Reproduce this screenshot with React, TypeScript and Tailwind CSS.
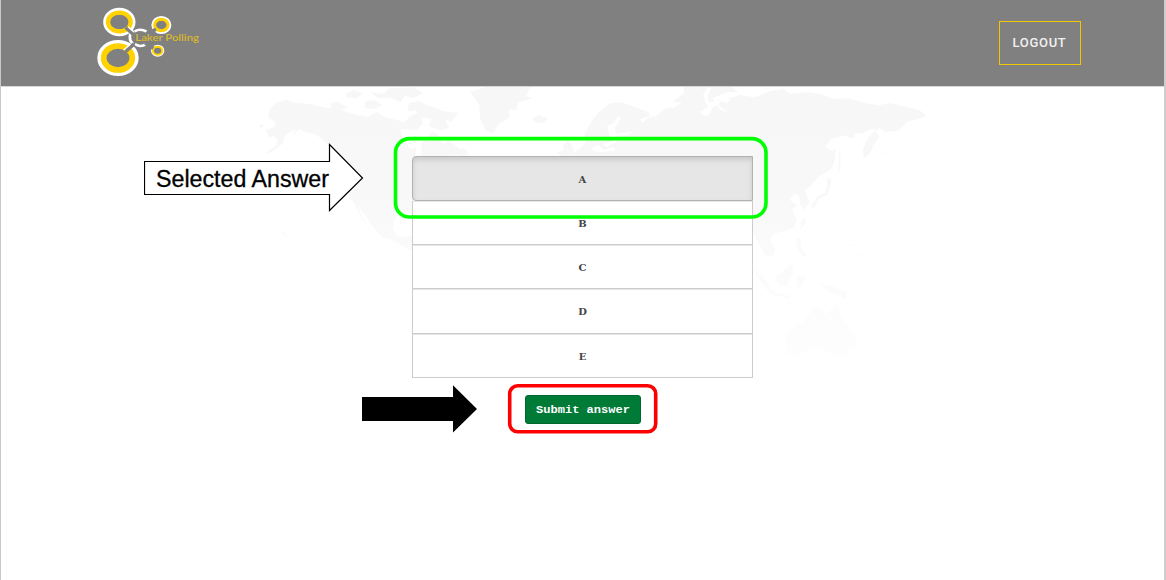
import React from "react";

const answers: string[] = ["B", "C", "D", "E"];

function Logo() {
  return (
    <svg width="130" height="86" viewBox="0 0 390 258" className="block" aria-label="Laker Polling">
      <g fill="none" stroke="#fff">
        <ellipse cx="103" cy="66" rx="39" ry="33" strokeWidth="19" />
        <ellipse cx="99" cy="174" rx="51" ry="43" strokeWidth="22" />
        <ellipse cx="229" cy="75" rx="24" ry="21" strokeWidth="12" />
        <ellipse cx="218" cy="152" rx="16" ry="14" strokeWidth="8" />
        <path d="M144 91A27 27 0 0 0 144 132M149 94Q166 84 185 95M150 132Q166 144 184 132" strokeWidth="8" />
      </g>
      <g fill="none" stroke="#ffd200">
        <ellipse cx="103" cy="66" rx="34" ry="28" strokeWidth="13" />
        <ellipse cx="99" cy="174" rx="43" ry="36" strokeWidth="17" />
        <ellipse cx="229" cy="75" rx="20" ry="17" strokeWidth="9" />
        <ellipse cx="218" cy="152" rx="14" ry="12" strokeWidth="6" />
      </g>
      <path d="M122 82L150 108M122 154L147 132M184 101L213 88M180 128L205 145" stroke="#808080" strokeWidth="11" />
      <path d="M129 80L148 97M116 150L136 133" stroke="#fff" strokeWidth="4" />
      <text x="151" y="124" textLength="191" lengthAdjust="spacingAndGlyphs" fill="#d9b72b" fontSize="27" fontFamily="Lato, sans-serif" fontWeight="600">Laker Polling</text>
    </svg>
  );
}

function WorldMap() {
  return (
    <svg width="1162" height="493" viewBox="1 87 1162 493" className="block">
      <defs>
        <linearGradient id="land" gradientUnits="userSpaceOnUse" x1="0" y1="20" x2="0" y2="860">
          <stop offset="0" stopColor="#f7f7f7" />
          <stop offset=".38" stopColor="#f8f8f8" />
          <stop offset=".65" stopColor="#fbfbfb" />
          <stop offset="1" stopColor="#fefefe" />
        </linearGradient>
      </defs>
      <g transform="translate(250 80) scale(.33333)" fill="url(#land)">
        <path d="M57 94L75 70L108 60L140 69L182 73L235 84L285 94L320 105L353 110L380 96L405 111L440 120L464 126L480 108L507 98L520 130L500 150L452 147L455 165L481 207L498 202L496 234L512 224L516 186L532 176L545 155L565 166L578 192L595 180L625 203L650 216L624 226L577 228L560 252L540 270L515 282L500 320L500 392L450 397L433 420L428 445L440 466L465 472L495 465L500 520L480 510L458 499L426 479L400 474L371 444L345 405L324 376L337 413L354 441L341 427L315 376L300 350L284 302L286 258L270 226L240 201L220 180L197 163L168 157L146 148L128 169L137 148L107 164L96 192L67 215L43 222L77 199L83 179L70 168L58 173L48 151L74 140L78 125L55 115Z" />
        <path d="M240 70L260 65L295 81L272 92L245 89ZM285 43L310 30L337 39L323 54L292 53ZM345 63L374 60L397 76L370 88L345 84ZM361 37L399 42L418 25L490 22L520 39L491 55L465 47L450 67L423 54L386 55ZM477 70L505 63L529 74L551 82L580 94L624 99L604 126L585 116L596 145L570 151L536 138L545 116L510 112L497 91L473 94ZM661 35L710 21L842 20L828 49L849 55L804 68L800 91L777 88L780 112L746 131L730 160L707 151L690 116L688 76ZM846 114L867 105L892 115L880 129L853 126ZM940 193L955 180L967 199L975 224L935 232L921 218L940 210ZM614 210L642 204L657 225L632 228Z" />
        <path d="M98 455l14 12l-5 5l-9-13M25 137l20-5l-12 12" />
      </g>
      <g transform="translate(570 80) scale(.33333)" fill="url(#land)">
        <path d="M44 161L65 123L85 97L120 70L155 67L180 76L236 97L239 109L210 117L216 129L235 113L258 109L284 86L314 82L337 67L306 67L342 40L340 20L480 20L505 35L470 37L445 51L450 63L420 67L402 58L415 82L390 95L402 107L420 89L452 66L480 55L507 45L554 52L600 34L642 27L660 42L710 36L753 43L787 57L835 55L884 69L925 76L962 69L1010 81L1050 91L1068 108L1048 116L1010 125L985 153L946 156L928 144L917 157L929 169L911 195L898 223L880 233L879 206L894 174L919 149L903 147L875 161L857 160L850 176L820 166L782 178L766 200L786 212L797 207L794 242L782 269L744 291L722 318L704 331L719 365L704 389L691 377L688 346L672 340L660 361L680 376L666 389L681 418L671 444L634 456L610 461L600 481L617 508L610 529L586 526L567 490L552 466L541 449L520 425L494 470L470 440L440 410L391 386L350 380L322 399L286 423L235 360L201 340L154 349L120 312L84 330L20 319L-30 337L-57 306L-34 277L0 279L9 219L30 207L47 185Z" />
        <path d="M807 207L806 258L800 282L810 267L812 230ZM772 290L785 302L780 322L772 345L745 358L730 389L722 377L742 350L765 338L772 315ZM695 421L704 413L707 429L690 449ZM679 472L691 477L693 504L711 528L696 528L681 500ZM550 565L586 597L606 632L660 648L657 657L599 640L575 611ZM617 590L665 552L670 578L650 620L627 615ZM681 591L707 585L700 610L680 628ZM745 610L786 618L830 637L827 657L779 637ZM645 765L673 740L702 723L735 681L755 685L765 705L802 673L811 709L827 728L858 768L857 803L821 839L788 825L759 811L723 805L675 830L650 827Z" />
        <path d="M844 497l18-5v4M860 522l20 6M890 547l17 8M928 213l35 14M820 299l17-9M839 281l14-9M857 264l9-9" stroke="#fafafa" strokeWidth="2" />
      </g>
      <g transform="translate(570 80) scale(.33333)" fill="#fff">
        <path d="M101 191L131 184L118 164L112 138L130 128L145 108L154 113L134 145L141 161L192 154L175 165L141 168L139 187L109 202ZM66 204L85 194L101 211L132 200L137 212L90 216L68 211ZM414 45L424 25L414 21L399 45L425 91L414 107L398 106L413 87ZM427 55L456 43L481 61L469 69L445 58L446 76L473 98L449 88L434 68Z" />
      </g>
    </svg>
  );
}

export default function App() {
  return (
    <div className="relative flex h-[580px] w-[1166px] flex-col overflow-hidden border-l border-[#c9c9c9] bg-white">
      <div className="flex h-full w-[1165px] flex-col border-r-2 border-[#cdcdcd]">
        <header className="flex h-[87px] shrink-0 items-start justify-between border-b border-[#d8d8d8] bg-[#808080] pr-[83px] pl-[84px]">
          <Logo />
          <button className="mt-[21px] flex h-11 w-[82px] items-center justify-center border border-[#f0c800] pr-px font-[Roboto,sans-serif] text-[13px] font-medium tracking-[0.7px] text-[#f1f1f1]">
            LOGOUT
          </button>
        </header>

        <main className="relative flex flex-1 flex-col items-center pt-[69px]">
          <div className="absolute inset-0">
            <WorldMap />
          </div>
          <div className="relative flex w-[341px] flex-col font-['DejaVu_Serif',serif] text-[10px] font-bold text-[#444]">
            <button className="h-[45px] rounded-l border border-[#b2b2b2] bg-[#e6e6e6] pt-0.5 shadow-[inset_0_3px_5px_rgba(0,0,0,0.125)]">
              A
            </button>
            {answers.map((answer) => (
              <button key={answer} className="h-[44.2px] border-x border-b border-[#ccc] bg-white pt-0.5 shadow-[inset_0_1px_0_#e6e6e6]">
                {answer}
              </button>
            ))}
          </div>
          <button className="relative mt-[17px] flex h-[29px] w-[116px] items-center justify-center rounded-[3px] border border-[#00682f] bg-[#007a37] text-white">
            <svg width="94" height="18" className="block">
              <text x="0" y="13" textLength="94" lengthAdjust="spacingAndGlyphs" fill="currentColor" fontSize="11.5" fontWeight="700" fontFamily="'Liberation Mono', monospace">Submit answer</text>
            </svg>
          </button>
        </main>
      </div>

      <svg width="376" height="84" className="absolute top-[136px] left-[392px]">
        <rect x="2.5" y="2.6" width="370.5" height="78.4" rx="14" fill="none" stroke="#00ff00" strokeWidth="3.6" />
      </svg>
      <svg width="152" height="52" className="absolute top-[383px] left-[506px]">
        <rect x="2.7" y="2.8" width="146" height="46" rx="8" fill="none" stroke="#ff0000" strokeWidth="3.6" />
      </svg>
      <svg width="222" height="70" className="absolute top-[143px] left-[143px]">
        <path d="M.5 18.5H185.5V1.5L218.5 35L185.5 67.5V51.5H.5Z" fill="#fff" stroke="#000" strokeWidth="1.2" />
        <text x="12" y="44" textLength="173" lengthAdjust="spacingAndGlyphs" fontSize="23" fontFamily="'Liberation Sans', sans-serif" fill="#000" stroke="#000" strokeWidth=".3">Selected Answer</text>
      </svg>
      <svg width="118" height="48" className="absolute top-[385px] left-[360px]">
        <path d="M1 12H92V.3L116 24L92 47.5V36H1Z" fill="#000" />
      </svg>
    </div>
  );
}
